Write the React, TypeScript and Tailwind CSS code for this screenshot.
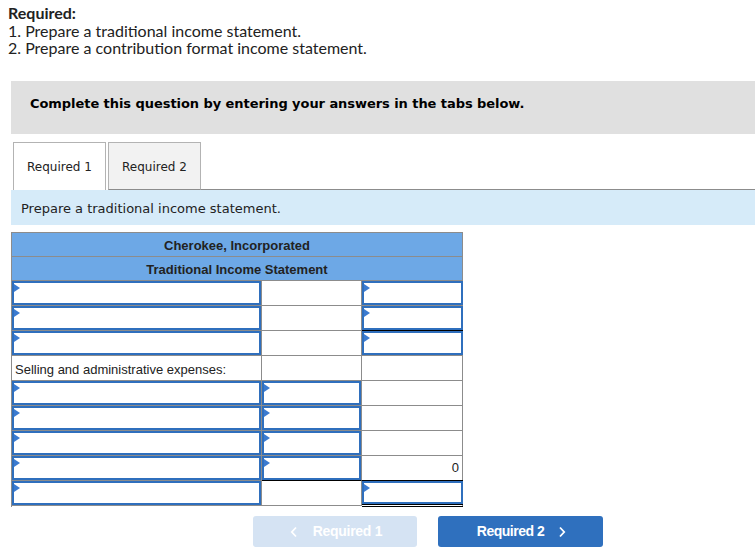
import React from "react";

type C = {
  kind: "in" | "plain" | "text" | "num";
  text?: string;
  b?: "gray" | "black" | "double";
};

const rows: C[][] = [
  [{ kind: "in" }, { kind: "plain" }, { kind: "in" }],
  [{ kind: "in" }, { kind: "plain" }, { kind: "in", b: "black" }],
  [{ kind: "in" }, { kind: "plain" }, { kind: "in" }],
  [{ kind: "text", text: "Selling and administrative expenses:" }, { kind: "plain" }, { kind: "plain" }],
  [{ kind: "in" }, { kind: "in" }, { kind: "plain" }],
  [{ kind: "in" }, { kind: "in" }, { kind: "plain" }],
  [{ kind: "in" }, { kind: "in" }, { kind: "plain" }],
  [{ kind: "in" }, { kind: "in", b: "black" }, { kind: "num", text: "0", b: "black" }],
  [{ kind: "in" }, { kind: "plain" }, { kind: "in", b: "double" }],
];

const widths = ["w-[250px]", "w-[100px]", "w-[101px]"];

function Tri() {
  return (
    <svg className="absolute left-0 top-[1px]" width="6" height="8" viewBox="0 0 6 8">
      <polygon points="0,0 6,4 0,8" fill="#3b7bd0" />
    </svg>
  );
}

function Cell({ c, i }: { c: C; i: number }) {
  const border =
    c.b === "black"
      ? "border-b border-b-black"
      : c.b === "double"
      ? "border-b-[3px] border-double border-b-black"
      : "border-b border-b-[#8c8c8c]";
  const right = i < 2 ? "border-r border-r-[#8c8c8c]" : "";
  return (
    <div className={`${widths[i]} shrink-0 ${border} ${right} ${c.b === "double" ? "h-[26px]" : "h-[25px]"}`}>
      {c.kind === "in" && (
        <div className="relative h-full w-full border-2 border-[#2f6fbd]">
          <Tri />
        </div>
      )}
      {c.kind === "text" && (
        <div className="h-full flex items-center pl-[3px] pt-[4px] text-[13px] text-[#222] font-['Liberation_Sans',Arial,sans-serif]">
          {c.text}
        </div>
      )}
      {c.kind === "num" && (
        <div className="h-full flex items-center justify-end pr-[4px] text-[13px] text-[#222] font-['Liberation_Sans',Arial,sans-serif]">
          {c.text}
        </div>
      )}
    </div>
  );
}

export default function App() {
  return (
    <div className="w-[755px] h-[559px] bg-white overflow-hidden">
      <div className="pl-[8px] pt-[4px] text-[16px] leading-[17.5px] text-[#222] font-['Lato','Open_Sans',sans-serif]">
        <p className="font-bold">Required:</p>
        <p>1. Prepare a traditional income statement.</p>
        <p>2. Prepare a contribution format income statement.</p>
      </div>

      <div className="ml-[11px] mt-[24px] h-[53px] bg-[#e0e0e0] flex items-center pl-[19px] pb-[6px] text-[13px] tracking-[-0.06px] font-bold text-black font-['DejaVu_Sans',Verdana,sans-serif]">
        Complete this question by entering your answers in the tabs below.
      </div>

      <div className="ml-[11px] mt-[8px] flex items-end">
        <div className="ml-[2px] w-[93px] h-[48px] border border-b-0 border-[#b3b3b3] bg-white flex items-center justify-center pt-[2px] text-[12px] text-[#222] font-['DejaVu_Sans',Verdana,sans-serif]">
          Required 1
        </div>
        <div className="ml-[2px] w-[93px] h-[48px] border border-[#b3b3b3] border-b-[#8c8c8c] bg-[#f2f2f2] flex items-center justify-center pt-[2px] text-[12px] text-[#222] font-['DejaVu_Sans',Verdana,sans-serif]">
          Required 2
        </div>
        <div className="flex-1 border-b border-[#8c8c8c]" />
      </div>

      <div className="ml-[11px] h-[35px] bg-[#d6ebf9] flex items-center pl-[10px] pt-[4px] text-[13px] text-[#222] font-['DejaVu_Sans',Verdana,sans-serif]">
        Prepare a traditional income statement.
      </div>

      <div className="ml-[11px] mt-[7px] w-[452px] border-l border-t border-r border-[#8c8c8c]">
        <div className="h-[24px] bg-[#6da8e6] border-b border-[#8c8c8c] flex items-center justify-center pt-[3px] text-[13px] font-bold text-[#222] font-['Liberation_Sans',Arial,sans-serif]">
          Cherokee, Incorporated
        </div>
        <div className="h-[24px] bg-[#6da8e6] border-b border-[#8c8c8c] flex items-center justify-center pt-[3px] text-[13px] font-bold text-[#222] font-['Liberation_Sans',Arial,sans-serif]">
          Traditional Income Statement
        </div>
        {rows.map((r, ri) => (
          <div key={ri} className="flex">
            {r.map((c, ci) => (
              <Cell key={ci} c={c} i={ci} />
            ))}
          </div>
        ))}
      </div>

      <div className="ml-[253px] mt-[9px] flex gap-[21px] font-['Liberation_Sans',Arial,sans-serif] text-[14px] font-bold text-white">
        <div className="w-[164px] h-[31px] rounded-[3px] bg-[#d5e3f3] flex items-center justify-center gap-[15px] pt-[1px] pl-[2px]">
          <svg width="8" height="12" viewBox="0 0 8 12">
            <path d="M6 1.5 L1.8 6 L6 10.5" fill="none" stroke="white" strokeWidth="1.8" />
          </svg>
          <span className="tracking-[-0.3px]">Required 1</span>
        </div>
        <div className="w-[165px] h-[31px] rounded-[3px] bg-[#2f70be] flex items-center justify-center gap-[14px] pt-[1px] pl-[2px]">
          <span className="tracking-[-0.5px]">Required 2</span>
          <svg width="8" height="12" viewBox="0 0 8 12">
            <path d="M2 1.5 L6.2 6 L2 10.5" fill="none" stroke="white" strokeWidth="1.8" />
          </svg>
        </div>
      </div>
    </div>
  );
}
